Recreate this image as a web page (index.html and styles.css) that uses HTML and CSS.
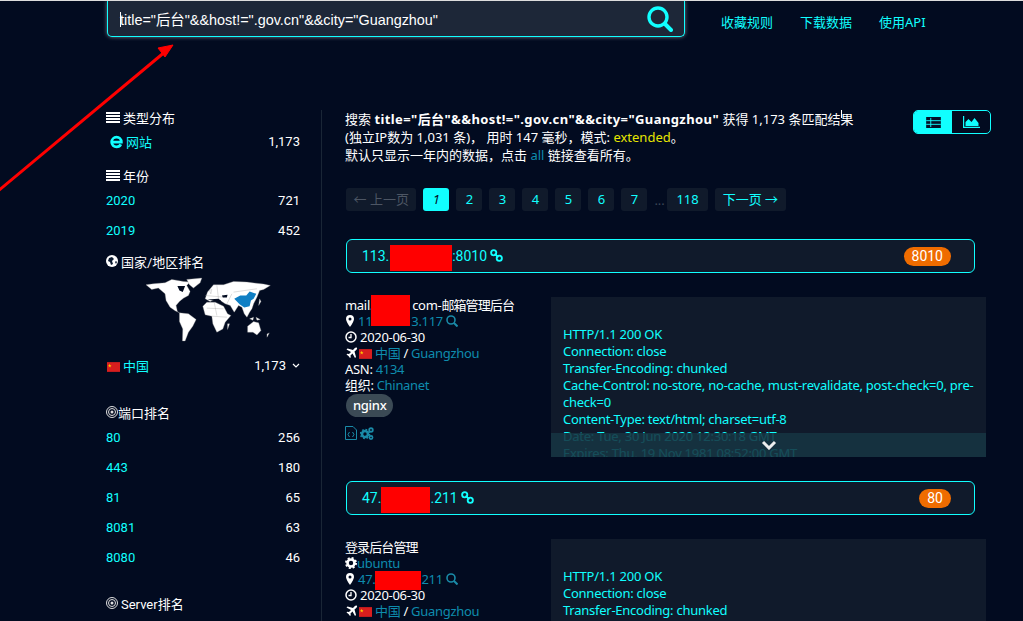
FILE: index.html
```html
<!DOCTYPE html>
<html lang="en">
<head>
    <meta charset="UTF-8">
    <title>搜索结果</title>
    <link rel="stylesheet" href="styles.css">
</head>
<body>
<div class="page">
    <div class="topbar">
        <div class="search">
            <div class="search-text"><i class="caret"></i>title="后台"&amp;&amp;host!=".gov.cn"&amp;&amp;city="Guangzhou"</div>
            <svg class="search-icon" viewBox="0 0 26 26"><circle cx="11" cy="11" r="9" fill="none" stroke="#1ff" stroke-width="3.4"/><path d="M18 18l6 6" stroke="#1ff" stroke-width="4" stroke-linecap="round"/></svg>
        </div>
        <nav class="topnav">
            <a href="#">收藏规则</a>
            <a href="#">下载数据</a>
            <a href="#">使用API</a>
        </nav>
    </div>

    <div class="layout">
        <aside class="sidebar">
            <div class="side-head first"><svg class="ico" viewBox="0 0 14 11"><path d="M0 0h14v2H0zM0 3h14v2H0zM0 6h14v2H0zM0 9h14v2H0z" fill="#fff"/></svg>类型分布</div>
            <div class="side-row">
                <a href="#" class="site-link"><svg class="ie" viewBox="0 0 14 14"><path d="M3 7.500h8.500C11.500 4.500 9.500 3 7 3S2.500 5 2.500 7.500 4.500 12 7 12c1.800 0 3.300-.8 4-2.300" fill="none" stroke="#1ff" stroke-width="2.600"/></svg>网站</a><span>1,173</span>
            </div>

            <div class="side-head year"><svg class="ico" viewBox="0 0 14 11"><path d="M0 0h14v2H0zM0 3h14v2H0zM0 6h14v2H0zM0 9h14v2H0z" fill="#fff"/></svg>年份</div>
            <div class="side-row"><a href="#">2020</a><span>721</span></div>
            <div class="side-row"><a href="#">2019</a><span>452</span></div>

            <div class="side-head"><svg class="ico globe" viewBox="0 0 12 12"><circle cx="6" cy="6" r="6" fill="#fff"/><path d="M3 3l3-1 2 2-2 2 1 3-2 1-1-3-2-1zM9 7l1-1 1 1-1 2z" fill="#0b1a30"/></svg>国家/地区排名</div>
            <svg class="worldmap" viewBox="165 85 380 200">
                <g fill="#fff" stroke="#999" stroke-width="1">
                    <path d="M168 108L190 105 225 102 245 92 280 98 300 100 290 110 300 128 295 140 280 148 268 158 258 170 262 188 268 192 255 186 240 175 228 155 225 135 205 118 185 122Z"/>
                    <path d="M290 92L335 88 330 102 310 118 298 108Z"/>
                    <path d="M268 192L295 195 318 212 308 232 295 250 285 276 277 276 278 240 268 218Z"/>
                    <path d="M338 172L350 160 375 160 400 172 412 195 422 200 405 220 398 240 380 250 368 225 365 202 345 198Z"/>
                    <path d="M345 150L352 130 370 108 400 108 430 98 470 100 520 106 540 110 520 122 508 125 500 145 490 165 485 180 478 190 470 205 462 195 455 175 445 170 432 190 420 170 405 165 390 155 375 152 360 158Z"/>
                    <path d="M472 232L490 218 505 222 512 245 500 258 488 250 472 250Z"/>
                    <path d="M508 150L512 158 505 170ZM530 255L537 252 530 265ZM358 125L365 122 362 135ZM412 225L418 225 412 242ZM478 210L490 205 488 214ZM497 205L510 212 500 214Z"/>
                    <path d="M350 178L400 180M365 202L410 205M372 160L380 200M345 140L400 145M380 110L385 150M430 130L500 120M410 165L425 135" fill="none"/>
                </g>
                <path d="M262 112L285 112 278 130 268 125ZM352 152L385 150 395 158 370 156ZM395 140L412 138 410 146 398 146Z" fill="#020b20"/>
                <path d="M432 150L450 140 468 140 478 128 498 135 490 150 482 155 478 172 462 176 448 166Z" fill="#0f7fc4"/>
            </svg>
            <div class="side-row">
                <a href="#"><svg class="flag" viewBox="0 0 12 9"><rect width="12" height="9" fill="#d81e1e"/><path d="M2.500 1.500l.5 1.300h1.200l-1 .8.400 1.300-1.100-.8-1.100.8.400-1.300-1-.8H2z" fill="#fc0"/></svg>中国</a>
                <span class="count-more">1,173<svg viewBox="0 0 8 5"><path d="M1 1l3 3 3-3" fill="none" stroke="#fff" stroke-width="1.200"/></svg></span>
            </div>

            <div class="side-head wide"><svg class="ico target" viewBox="0 0 12 12"><circle cx="6" cy="6" r="5.500" fill="none" stroke="#ddd"/><circle cx="6" cy="6" r="3.500" fill="none" stroke="#ddd"/><circle cx="6" cy="6" r="1.500" fill="#ddd"/></svg>端口排名</div>
            <div class="side-row"><a href="#">80</a><span>256</span></div>
            <div class="side-row"><a href="#">443</a><span>180</span></div>
            <div class="side-row"><a href="#">81</a><span>65</span></div>
            <div class="side-row"><a href="#">8081</a><span>63</span></div>
            <div class="side-row"><a href="#">8080</a><span>46</span></div>

            <div class="side-head last"><svg class="ico target spaced" viewBox="0 0 12 12"><circle cx="6" cy="6" r="5.500" fill="none" stroke="#ddd"/><circle cx="6" cy="6" r="3.500" fill="none" stroke="#ddd"/><circle cx="6" cy="6" r="1.500" fill="#ddd"/></svg>Server排名</div>
        </aside>

        <main class="results">
            <div class="summary">
                <p>搜索 <b>title="后台"&amp;&amp;host!=".gov.cn"&amp;&amp;city="Guangzhou"</b> 获得 1,173 条匹配结果<br>
                (独立IP数为 1,031 条)， 用时 147 毫秒，模式: <span class="mode">extended</span>。<br>
                默认只显示一年内的数据，点击 <a href="#" class="dim">all</a> 链接查看所有。</p>
                <i class="ibeam"></i>
                <div class="view-toggle">
                    <span class="active"><svg viewBox="0 0 16 12"><path d="M0 0h16v12H0z" fill="#041028"/><path d="M5 1v10M0 4h16M0 8h16" stroke="#1ff" stroke-width="1"/></svg></span>
                    <span><svg class="chart" viewBox="0 0 17 12"><path d="M.6 0v11.400H17" fill="none" stroke="#1ff" stroke-width="1.200"/><path d="M2.500 10V6l3-3 3 3 3-4 4 5v3z" fill="#1ff"/></svg></span>
                </div>
            </div>

            <div class="pager">
                <a href="#" class="disabled">← 上一页</a>
                <a href="#" class="current">1</a>
                <a href="#">2</a>
                <a href="#">3</a>
                <a href="#">4</a>
                <a href="#">5</a>
                <a href="#">6</a>
                <a href="#">7</a>
                <span class="gap">...</span>
                <a href="#">118</a>
                <a href="#" class="next">下一页 →</a>
            </div>

            <section class="hit">
                <div class="hit-head">
                    <span>113.1<i class="mask head-mask first-mask"></i>:8010<svg class="chain" viewBox="0 0 14 14"><g fill="none" stroke="#1ff" stroke-width="2"><circle cx="4" cy="4" r="2.800"/><circle cx="10" cy="10" r="2.800"/><path d="M5 5l4 4"/></g></svg></span>
                    <span class="port">8010</span>
                </div>
                <div class="hit-body">
                    <div class="info">
                        <i class="mask info-mask"></i>
                        <div>mail.<i class="gap-39"></i>com-<span class="title-cn">邮箱管理后台</span></div>
                        <div><svg class="mi" viewBox="0 0 8 12"><path d="M4 0a4 4 0 0 0-4 4c0 2.500 4 8 4 8s4-5.500 4-8a4 4 0 0 0-4-4zm0 5.500a1.500 1.500 0 1 1 0-3 1.500 1.500 0 0 1 0 3z" fill="#fff"/></svg><a href="#" class="dim">11<i class="gap-39"></i>3.117</a> <svg class="mi lens" viewBox="0 0 12 12"><circle cx="5" cy="5" r="4" fill="none" stroke="#1a8ba8" stroke-width="1.600"/><path d="M8 8l3.500 3.500" stroke="#1a8ba8" stroke-width="2"/></svg></div>
                        <div><svg class="mi clock" viewBox="0 0 12 12"><circle cx="6" cy="6" r="5" fill="none" stroke="#fff" stroke-width="1.500"/><path d="M6 3v3.500H3.500" fill="none" stroke="#fff" stroke-width="1.300"/></svg>2020-06-30</div>
                        <div><svg class="mi plane" viewBox="0 0 12 12"><path d="M11.500 1c-.5-.7-1.700-.4-2.400.3L7.500 3 2 1.500 1 2.500 5.500 5 3.500 7 1.800 6.700 1 7.500 3 9l1.500 2 .8-.8L5 8.500l2-2 2.500 4.500 1-1L9 4.500l1.700-1.600c.7-.7 1.200-1.400.8-1.900z" fill="#fff"/></svg><svg class="flag" viewBox="0 0 12 9"><rect width="12" height="9" fill="#d81e1e"/><path d="M2.500 1.500l.5 1.300h1.200l-1 .8.400 1.300-1.100-.8-1.100.8.400-1.300-1-.8H2z" fill="#fc0"/></svg><a href="#" class="dim">中国</a> / <a href="#" class="dim">Guangzhou</a></div>
                        <div>ASN: <a href="#" class="dim">4134</a></div>
                        <div>组织: <a href="#" class="dim">Chinanet</a></div>
                        <span class="tag">nginx</span>
                        <div class="tools">
                            <svg class="file" viewBox="0 0 12 14"><path d="M.5.500h7.500l3.500 3.500v9.500H.5z" fill="none" stroke="#1a8ba8"/><path d="M4.500 6L3 8.500 4.500 11M7.500 6L9 8.500 7.500 11" fill="none" stroke="#1a8ba8"/></svg>
                            <svg class="cogs" viewBox="0 0 14 13"><circle cx="5" cy="7" r="3" fill="none" stroke="#1a8ba8" stroke-width="2.600"/><circle cx="5" cy="7" r="4.600" fill="none" stroke="#1a8ba8" stroke-width="1.400" stroke-dasharray="1.800 1.800"/><circle cx="11" cy="3" r="1.800" fill="none" stroke="#1a8ba8" stroke-width="1.800"/><circle cx="11" cy="10.500" r="1.600" fill="none" stroke="#1a8ba8" stroke-width="1.600"/></svg>
                        </div>
                    </div>
                    <div class="banner">
                        <pre>HTTP/1.1 200 OK
Connection: close
Transfer-Encoding: chunked
Cache-Control: no-store, no-cache, must-revalidate, post-check=0, pre-check=0
Content-Type: text/html; charset=utf-8
Date: Tue, 30 Jun 2020 12:30:18 GMT
Expires: Thu, 19 Nov 1981 08:52:00 GMT</pre>
                        <div class="more"><svg viewBox="0 0 16 10"><path d="M2 2l6 6 6-6" fill="none" stroke="#eee" stroke-width="3"/></svg></div>
                    </div>
                </div>
            </section>

            <section class="hit">
                <div class="hit-head">
                    <span class="short">47.<i class="mask head-mask second-mask"></i>.211<svg class="chain" viewBox="0 0 14 14"><g fill="none" stroke="#1ff" stroke-width="2"><circle cx="4" cy="4" r="2.800"/><circle cx="10" cy="10" r="2.800"/><path d="M5 5l4 4"/></g></svg></span>
                    <span class="port">80</span>
                </div>
                <div class="hit-body">
                    <div class="info">
                        <div><span class="title-cn">登录后台管理</span></div>
                        <div><svg class="mi gear" viewBox="0 0 12 12"><circle cx="6" cy="6" r="3.500" fill="none" stroke="#fff" stroke-width="2.600"/><circle cx="6" cy="6" r="5" fill="none" stroke="#fff" stroke-width="2" stroke-dasharray="2 1.930"/></svg><a href="#" class="dim">ubuntu</a></div>
                        <div><svg class="mi" viewBox="0 0 8 12"><path d="M4 0a4 4 0 0 0-4 4c0 2.500 4 8 4 8s4-5.500 4-8a4 4 0 0 0-4-4zm0 5.500a1.500 1.500 0 1 1 0-3 1.500 1.500 0 0 1 0 3z" fill="#fff"/></svg><a href="#" class="dim">47.<i class="mask line-mask"></i>211</a> <svg class="mi lens" viewBox="0 0 12 12"><circle cx="5" cy="5" r="4" fill="none" stroke="#1a8ba8" stroke-width="1.600"/><path d="M8 8l3.500 3.500" stroke="#1a8ba8" stroke-width="2"/></svg></div>
                        <div><svg class="mi clock" viewBox="0 0 12 12"><circle cx="6" cy="6" r="5" fill="none" stroke="#fff" stroke-width="1.500"/><path d="M6 3v3.500H3.500" fill="none" stroke="#fff" stroke-width="1.300"/></svg>2020-06-30</div>
                        <div><svg class="mi plane" viewBox="0 0 12 12"><path d="M11.500 1c-.5-.7-1.700-.4-2.400.3L7.500 3 2 1.500 1 2.500 5.500 5 3.500 7 1.800 6.700 1 7.500 3 9l1.500 2 .8-.8L5 8.500l2-2 2.500 4.500 1-1L9 4.500l1.700-1.600c.7-.7 1.200-1.400.8-1.900z" fill="#fff"/></svg><svg class="flag" viewBox="0 0 12 9"><rect width="12" height="9" fill="#d81e1e"/><path d="M2.500 1.500l.5 1.300h1.200l-1 .8.400 1.300-1.100-.8-1.100.8.400-1.300-1-.8H2z" fill="#fc0"/></svg><a href="#" class="dim">中国</a> / <a href="#" class="dim">Guangzhou</a></div>
                    </div>
                    <div class="banner">
                        <pre>HTTP/1.1 200 OK
Connection: close
Transfer-Encoding: chunked</pre>
                    </div>
                </div>
            </section>
        </main>
    </div>

    <svg class="arrow" viewBox="0 0 180 195"><path d="M-2 190L166 50" stroke="#f00" stroke-width="3"/><path d="M173 44l-15 3 7 9z" fill="#f00" stroke="#f00"/></svg>
</div>
</body>
</html>
```

FILE: styles.css
```css
* {
    box-sizing: border-box;
}
html, body {
    margin: 0;
    background: #020b20;
}
body {
    font-family: "Noto Sans", "Noto Sans CJK SC", sans-serif;
    font-size: 13px;
    color: #fff;
}
a {
    color: #1ff;
    text-decoration: none;
}
.page {
    position: relative;
    height: 621px;
    overflow: hidden;
    border-top: 1px solid #ddd;
}

/* top bar */
.topbar {
    display: flex;
    padding-left: 107px;
}
.search {
    display: flex;
    align-items: center;
    justify-content: space-between;
    width: 578px;
    height: 36px;
    padding: 0 12px;
    background: #1d2738;
    border: 1px solid #1ff;
    border-top: 0;
    border-radius: 0 0 5px 5px;
    box-shadow: 0 0 4px rgba(255, 255, 255, .45);
}
.search-text {
    font-family: "Liberation Sans", "Noto Sans CJK SC", sans-serif;
    font-size: 14.400px;
}
.caret {
    display: inline-block;
    width: 1px;
    height: 15px;
    margin-right: -1px;
    vertical-align: -2px;
    background: #fff;
}
.search-icon {
    width: 26px;
    height: 26px;
    margin-right: -1px;
}
.topnav {
    display: flex;
    gap: 27px;
    margin-left: 36px;
    padding-top: 11px;
}

.layout {
    display: flex;
    margin: 73px 0 0 106px;
}

/* left column */
.sidebar {
    width: 216px;
    padding-right: 21px;
    border-right: 1px solid #1a2636;
    font-family: Roboto, "Noto Sans CJK SC", sans-serif;
}
.side-head {
    display: flex;
    align-items: center;
    height: 18px;
    margin-top: 7px;
    margin-bottom: 1px;
}
.side-head.first {
    margin-top: -2px;
    margin-bottom: 0;
}
.side-head.year {
    margin-top: 10px;
}
.side-head.wide {
    margin-top: 23px;
}
.side-head.last {
    margin-top: 22px;
}
.ico {
    flex: none;
    width: 14px;
    height: 11px;
    margin-right: 3px;
}
.globe, .target {
    width: 12px;
    height: 12px;
}
.target {
    margin-right: 0;
}
.target.spaced {
    margin-right: 3px;
}
.side-row {
    display: flex;
    align-items: center;
    justify-content: space-between;
    height: 30px;
    color: #fff;
}
.site-link {
    display: flex;
    align-items: center;
    padding-left: 3px;
}
.ie {
    width: 15px;
    height: 15px;
    margin-right: 2px;
}
.flag {
    width: 13px;
    height: 10px;
    margin-right: 3px;
    vertical-align: -1px;
}
.worldmap {
    display: block;
    width: 127px;
    height: 67px;
    margin: 7px 0 6px 39px;
}
.side-row a .flag {
    margin-left: 1px;
}
.count-more {
    display: flex;
    align-items: center;
    gap: 6px;
}
.count-more svg {
    width: 8px;
    height: 5px;
}

/* results */
.results {
    width: 641px;
    margin-left: 23px;
}
.summary {
    position: relative;
    width: 646px;
    height: 78px;
}
.summary p {
    margin: 0;
    width: 530px;
    line-height: 18px;
}
.summary b {
    letter-spacing: .4px;
}
.mode {
    color: #e6e600;
}
.dim {
    color: #0e8cae;
}
.ibeam {
    position: absolute;
    left: 496px;
    top: 0;
    width: 1px;
    height: 8px;
    background: #fff;
}
.view-toggle {
    position: absolute;
    right: 0;
    top: 0;
    display: flex;
    width: 78px;
    height: 24px;
    border: 1px solid #1ff;
    border-radius: 5px;
    overflow: hidden;
}
.view-toggle span {
    display: flex;
    flex: 1;
    align-items: center;
    justify-content: center;
}
.view-toggle .active {
    background: #1ff;
}
.view-toggle svg {
    width: 15px;
    height: 11px;
}
.view-toggle .chart {
    width: 17px;
    height: 12px;
}
.pager {
    display: flex;
    align-items: center;
    gap: 7px;
    margin: 0 0 4px 1px;
    height: 23px;
}
.pager a {
    display: block;
    min-width: 26px;
    height: 23px;
    padding: 0 9px;
    border-radius: 3px;
    background: #101a2b;
    line-height: 23px;
    text-align: center;
}
.pager .disabled {
    padding: 0 7.500px;
    color: #4d5664;
}
.pager .next {
    padding: 0 8px;
}
.pager .current {
    background: #1ff;
    color: #041028;
    font-style: italic;
}
.gap {
    width: 6px;
    color: #3c4656;
}
.hit {
    margin-left: 1px;
    padding-top: 24px;
}
.hit-head {
    display: flex;
    align-items: center;
    justify-content: space-between;
    width: 629px;
    height: 34px;
    padding: 1px 23px 0 15px;
    background: #101a2b;
    border: 1px solid #1ff;
    border-radius: 6px;
    font-family: Roboto, sans-serif;
    font-size: 14px;
    color: #1ff;
}
.mask {
    display: inline-block;
    background: #f00;
}
.head-mask {
    height: 26px;
    margin: -6px 0;
    vertical-align: middle;
}
.first-mask {
    width: 62px;
    margin-left: -7px;
}
.second-mask {
    width: 49px;
}
.line-mask {
    width: 46px;
    height: 19px;
    margin: -3px 0;
    vertical-align: middle;
}
.chain {
    width: 13px;
    height: 13px;
    margin-left: 3px;
    vertical-align: -1px;
}
.port {
    min-width: 31px;
    height: 19px;
    padding: 0 8px;
    border-radius: 10px;
    background: #ef6c00;
    color: #fff;
    line-height: 19px;
    text-align: center;
}
.hit-body {
    display: flex;
    margin: 24px 0 0 -1px;
}
.info {
    position: relative;
    width: 206px;
    line-height: 16px;
    letter-spacing: -.3px;
}
.title-cn {
    letter-spacing: -.9px;
}
.info-mask {
    position: absolute;
    left: 26px;
    top: -2px;
    width: 39px;
    height: 31px;
}
.gap-39 {
    display: inline-block;
    width: 39px;
}
.mi {
    width: 10px;
    height: 12px;
    margin-right: 3px;
    vertical-align: -1px;
}
.lens, .clock {
    width: 12px;
}
.plane {
    width: 13px;
    margin-right: 1px;
}
.gear {
    width: 12px;
    margin-right: 0;
}
.tag {
    display: inline-block;
    margin: 1px 0 0 1px;
    height: 23px;
    padding: 0 7px;
    border-radius: 12px;
    background: #3b4a55;
    font-weight: 500;
    line-height: 23px;
}
.tools {
    display: flex;
    align-items: center;
    gap: 3px;
    margin-top: 9px;
}
.tools .file {
    width: 12px;
    height: 14px;
}
.tools .cogs {
    width: 14px;
    height: 13px;
}
.banner {
    position: relative;
    width: 435px;
    height: 160px;
    padding: 29px 12px 0;
    overflow: hidden;
    background: #101a2b;
}
.banner pre {
    margin: 0;
    font-family: "Noto Sans", sans-serif;
    font-size: 13px;
    line-height: 17px;
    letter-spacing: -.25px;
    white-space: pre-wrap;
    color: #1ff;
}
.more {
    position: absolute;
    left: 0;
    right: 0;
    bottom: 0;
    display: flex;
    justify-content: center;
    height: 24px;
    padding-top: 7px;
    background: rgba(22, 52, 66, .88);
}
.more svg {
    width: 16px;
    height: 10px;
}
.arrow {
    position: absolute;
    left: 0;
    top: 0;
    width: 180px;
    height: 195px;
    pointer-events: none;
}
```
